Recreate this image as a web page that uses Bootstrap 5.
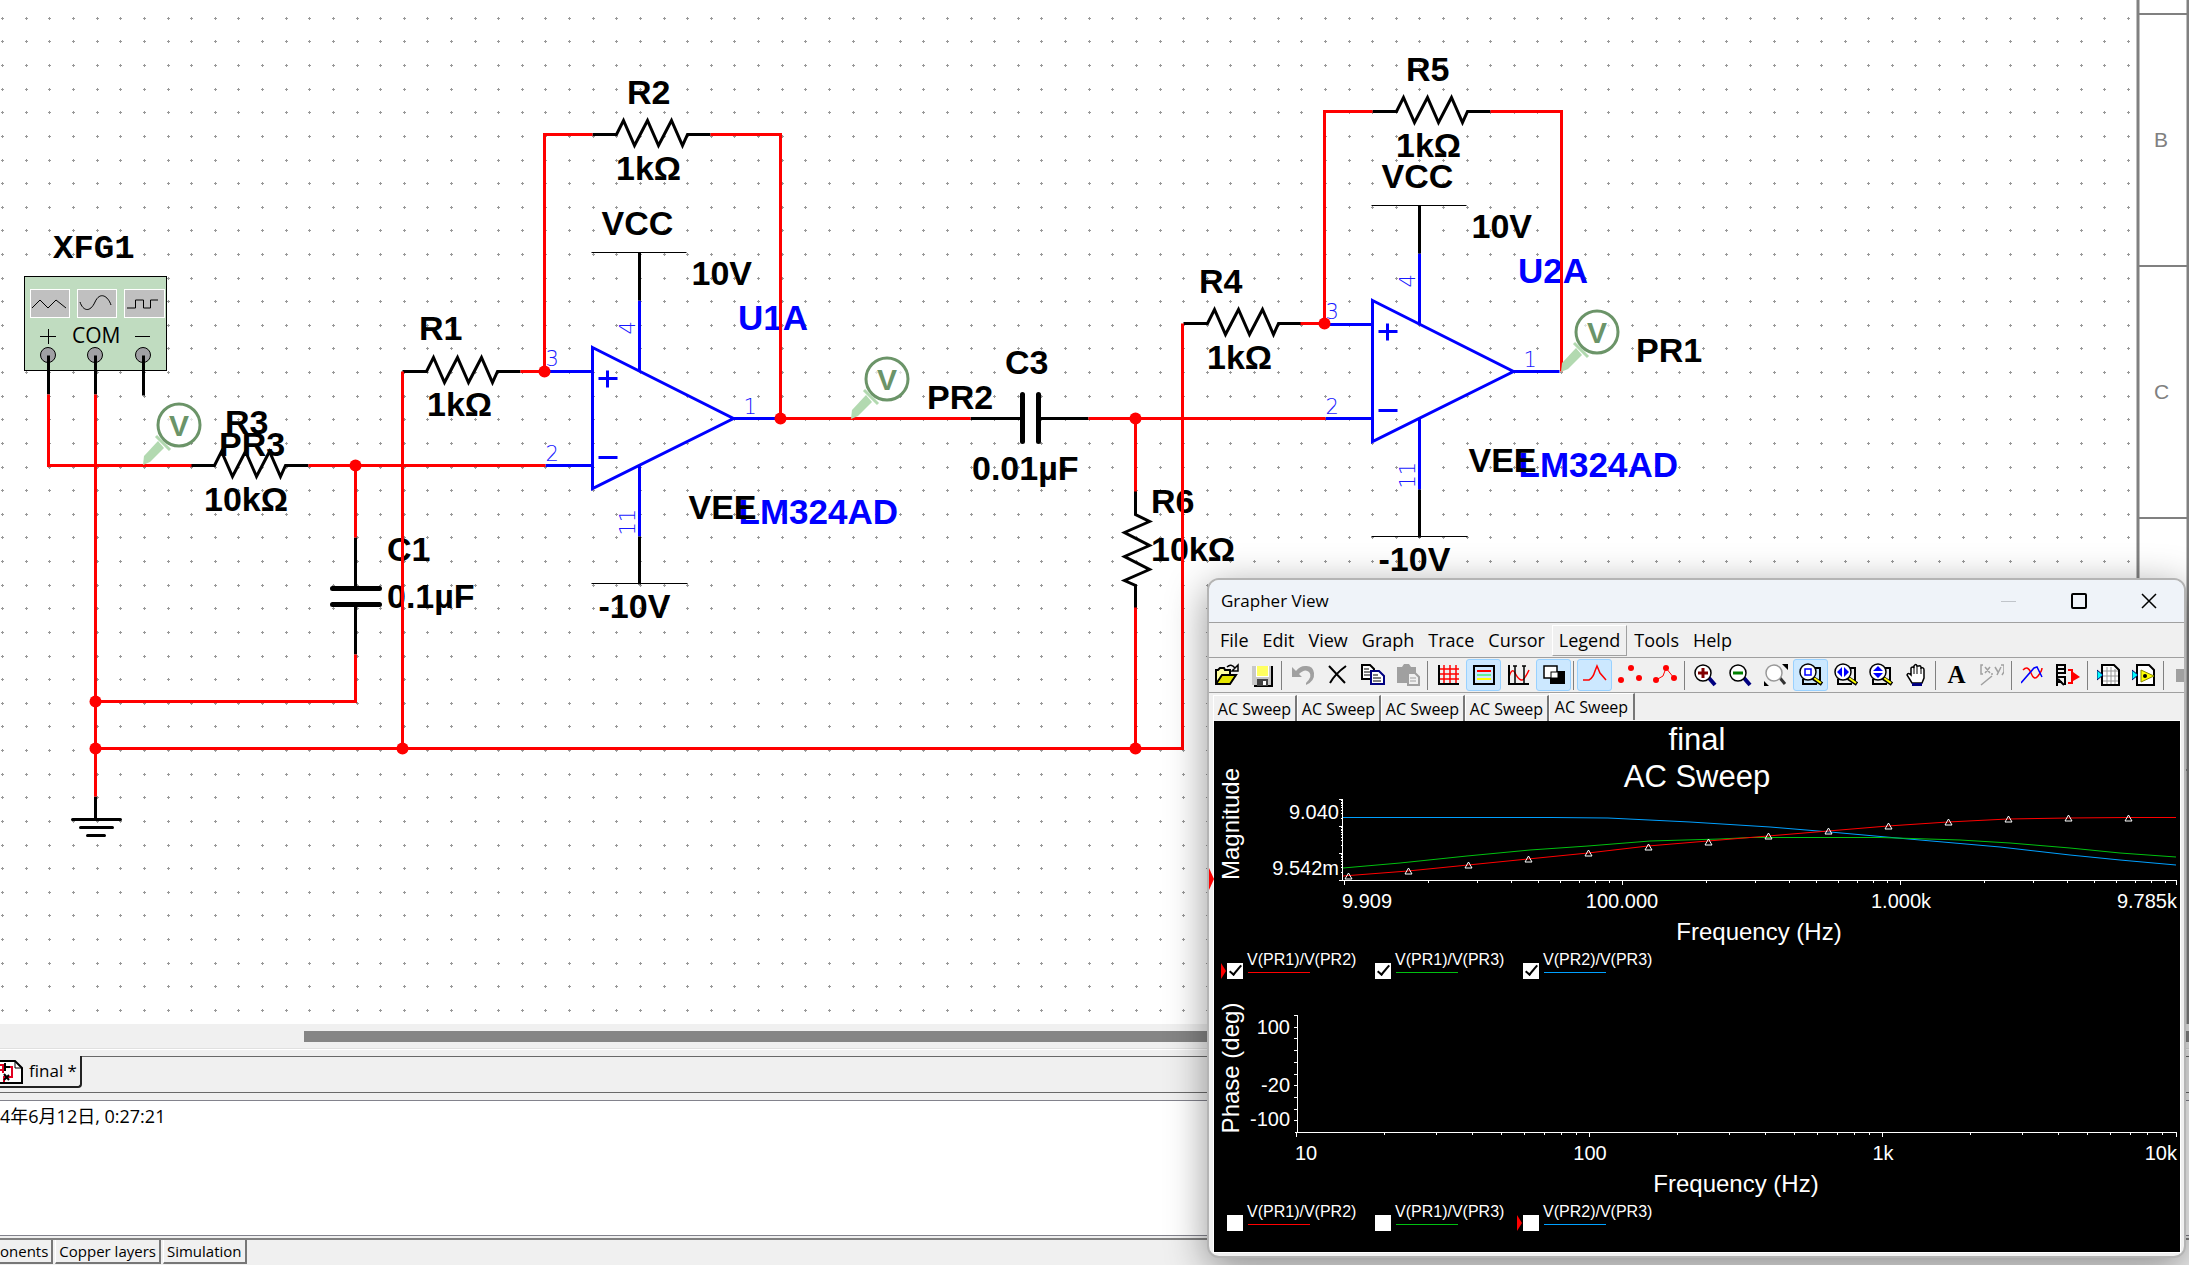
<!DOCTYPE html>
<html lang="en" class="overflow-hidden">
<head>
<meta charset="utf-8">
<meta name="viewport" content="width=device-width, initial-scale=1">
<title>final - Multisim</title>
<link href="https://cdn.jsdelivr.net/npm/bootstrap@5.3.0/dist/css/bootstrap.min.css" rel="stylesheet">
<style>
  body { font-family: "Open Sans", "Noto Sans CJK SC", sans-serif; font-size: 17px; color: #000; background: #f0f0f0; }
  button { font-family: inherit; color: inherit; }
  .sheet-area { min-height: 0; background: #fff; }
  .sheet-area svg { display: block; }
  .sheet-text { font: bold 34px "Liberation Sans", sans-serif; }
  .part-name { font-size: 35px; fill: #00f; }
  .pin-text { font: 200 21px "DejaVu Sans", sans-serif; fill: #1818ff; }
  .border-letter { font: 21px "Liberation Sans", sans-serif; fill: #808080; }

  .hscroll { height: 26px; padding-top: 7px; border-bottom: 1px solid #fff; box-shadow: inset 0 -1px #e0e0e0; }
  .hscroll-thumb { height: 11px; margin-left: 304px; background: #858585; }
  .doc-strip { height: 43px; padding-top: 6px; border-bottom: 1px solid #696969; }
  .doc-tab { height: 32px; width: 82px; padding: 0 0 0 26px; border: 0; border-right: 2px solid #222; border-bottom: 2px solid #222; border-radius: 0 0 4px 0; background: #f0f0f0; font-size: 17px; line-height: 30px; white-space: nowrap; }
  .doc-tab svg { left: 0; top: 4px; }
  .doc-rest { border-top: 1px solid #696969; }
  .log-pane { height: 136px; margin-top: 7px; background: #fff; border-top: 1px solid #82828c; border-bottom: 1px solid #82828c; font-size: 18px; line-height: 24px; padding-top: 3px; }
  .sheet-tabs { height: 27px; margin-top: 2px; border-top: 2px solid #808080; }
  .sheet-tabs button { height: 24px; margin-right: 2px; padding: 0 3px; border: 0; border-right: 2px solid #777; border-bottom: 2px solid #777; border-left: 1px solid #fff; background: #f0f0f0; font-size: 15px; line-height: 22px; }

  .grapher { right: 3px; bottom: 7px; width: 979px; background: #f0f0f0; border: 2px solid #b4b4b4; border-radius: 12px; box-shadow: 0 10px 40px rgba(0,0,0,.42); overflow: hidden; }
  .title-bar { height: 43px; padding-left: 12px; background: #eff3f9; border-bottom: 1px solid #a0a0a0; line-height: 24px; }
  .title-bar button { width: 70px; border: 0; background: none; padding: 0; line-height: 0; }
  .menu-bar { height: 35px; padding-left: 4px; border-bottom: 1px solid #a0a0a0; }
  .menu-bar button { height: 31px; padding: 0 6px; border: 1px solid transparent; background: none; font-size: 18px; line-height: 28px; }
  .menu-bar .lit { border-color: #fff #a0a0a0 #a0a0a0 #fff; }
  .tool-bar { height: 35px; border-bottom: 1px solid #a0a0a0; }
  .tool-bar button { flex: none; width: 35px; height: 32px; padding: 0; border: 1px solid transparent; border-radius: 3px; background: none; line-height: 0; }
  .tool-bar .on { background: #cce8ff; border-color: #99d1ff; }
  .tool-bar i { flex: none; width: 1px; height: 29px; margin: 0 3px 0 2px; background: #808080; }
  .tool-bar svg { width: 24px; height: 24px; }
  .tool-bar .letter-tool { font: bold 25px/28px "Liberation Serif", serif; }
  .tool-bar .more-mark { flex: none; width: 20px; height: 13px; margin-left: 9px; background: #a0a0a0; }
  .page-tabs { height: 28px; padding: 0 4px; }
  .page-tabs button { width: 84px; height: 26px; padding: 0; border: 0; border-left: 1px solid #fff; border-top: 1px solid #fff; border-right: 2px solid #777; background: #f0f0f0; font-size: 16px; line-height: 22px; }
  .page-tabs .current { width: 86px; height: 27px; }
  .plots { margin: 0 4px 4px 5px; background: #000; color: #fff; font-family: "Liberation Sans", sans-serif; box-shadow: 0 0 0 1px #fff; }
  .plots svg { display: block; width: 100%; }
  .plots text { fill: #fff; font-size: 20px; }
  .plots .head { font-size: 31px; }
  .plots .axis-name { font-size: 24px; }
  .key-row { height: 36px; padding-left: 13px; }
  .key-item { width: 148px; font-size: 16px; line-height: 16px; }
  .key-item label { padding-bottom: 4px; }
  .key-item hr { width: 62px; margin: 0 0 0 1px; border: 0; height: 1px; opacity: 1; background: var(--trace); }
  .key-item input { appearance: none; width: 16px; height: 16px; margin: 11px 4px 0 0; background: #fff; }
  .key-item input:checked::before { content: ""; display: block; width: 13px; height: 6px; margin: 3px 0 0 2px; border: solid #000; border-width: 0 0 2px 2px; transform: rotate(-50deg); }
  .flag { left: -6px; top: 11px; border: solid transparent; border-width: 8px 0 8px 5px; border-left-color: red; }
  .side-flag { left: 0; top: 288px; border: solid transparent; border-width: 11px 0 11px 5px; border-left-color: red; }
</style>
<script src="https://cdn.jsdelivr.net/npm/bootstrap@5.3.0/dist/js/bootstrap.bundle.min.js"></script>
</head>
<body class="vh-100 overflow-hidden position-relative d-flex flex-column">

<main class="sheet-area flex-grow-1 overflow-hidden">
<svg width="100%" height="100%" role="img" aria-label="Schematic final">
  <defs>
    <path id="res" d="M0 0H24L31 -14L42 11L55 -14L66 11L79 -14L90 11L95 0H118" fill="none" stroke="#000" stroke-width="3"/>
    <g id="probe">
      <path d="M0 0L1 -9L15 -24L21 -17L7 -3Z" fill="#b2d9b0"/>
      <path d="M13 -29L27 -15" stroke="#b2d9b0" stroke-width="3"/>
      <circle cx="36" cy="-40" r="21" fill="#fff" fill-opacity=".7" stroke="#6b9468" stroke-width="3"/>
      <text x="36" y="-29" text-anchor="middle" font-family="Liberation Sans, sans-serif" font-weight="bold" font-size="30" fill="#6b9468">V</text>
    </g>
    <g id="amp">
      <g fill="none" stroke="#00f" stroke-width="3">
        <path d="M592 347L733 418L592 488Z"/>
        <path d="M544 371H592M545 465H592M733 418H779M639 300V371M639 465V536M598 378H617M607 370V387M598 457H617"/>
      </g>
      <path d="M639 252V300M639 536V584" stroke="#000" stroke-width="3"/>
      <path d="M591 252H686M591 583H687" stroke="#000"/>
      <g class="pin-text">
        <text x="545" y="365">3</text><text x="545" y="460">2</text><text x="743" y="413">1</text>
        <text transform="translate(634 334) rotate(-90)">4</text>
        <text transform="translate(634 535) rotate(-90)">11</text>
      </g>
      <g class="sheet-text">
        <text x="601" y="234">VCC</text><text x="691" y="284">10V</text>
        <text x="598" y="617">-10V</text><text class="part-name" x="738" y="523">LM324AD</text><text x="688" y="518">VEE</text>
      </g>
    </g>
  </defs>
  <path id="grid" stroke="#999" shape-rendering="crispEdges" fill="none"/>
  <path d="M2138 0V1025M2188 0V1025" stroke="#808080" stroke-width="3"/>
  <path d="M2138 14H2189M2138 266H2189M2138 518H2189M2138 770H2189" stroke="#808080" stroke-width="2"/>
  <g class="border-letter"><text x="2154" y="147">B</text><text x="2154" y="399">C</text></g>

  <g class="sheet-text">
    <text x="53" y="258" style="font-family:'Liberation Mono',monospace">XFG1</text>
    <text x="627" y="104">R2</text><text x="616" y="180">1kΩ</text>
    <text x="419" y="340">R1</text><text x="427" y="416">1kΩ</text>
    <text x="387" y="561">C1</text><text x="387" y="608">0.1µF</text>
    <text x="1005" y="374">C3</text><text x="972" y="480">0.01µF</text>
    <text x="1151" y="513">R6</text><text x="1151" y="561">10kΩ</text>
    <text x="1199" y="293">R4</text><text x="1207" y="369">1kΩ</text>
    <text x="1406" y="81">R5</text><text x="1396" y="157">1kΩ</text>
    <text class="part-name" x="738" y="330">U1A</text><text class="part-name" x="1518" y="283">U2A</text>
  </g>

  <!-- function generator -->
  <g shape-rendering="crispEdges">
    <rect x="24" y="276" width="142" height="94" fill="#c0dcc0" stroke="#000"/>
    <g fill="#c0c0c0" stroke="#fff"><rect x="30" y="289" width="39" height="28"/><rect x="77" y="289" width="39" height="28"/><rect x="124" y="289" width="40" height="28"/></g>
  </g>
  <g fill="none" stroke="#000">
    <path d="M32 308L40 300L48 308L56 300L66 308M80 302C83 311 90 313 95 302S108 296 111 305M127 308H135.500V300H143.500V308H150.500V300H158M40 336.500H56M48.500 329V344M135 336.500H150"/>
    <g fill="#a0a0a4"><circle cx="48" cy="355" r="7.500"/><circle cx="95" cy="355" r="7.500"/><circle cx="143" cy="355" r="7.500"/></g>
  </g>
  <text x="72" y="343" font-size="21">COM</text>

  <g transform="translate(.5 .5)">
    <use href="#amp"/><use href="#amp" x="780" y="-47"/>
    <path d="M48 355V394M95 355V394M143 355V395M95 796V819M355 537V588M355 604V654M970 418H1022M1039 418H1088" stroke="#000" stroke-width="3"/>
    <path d="M72 819H120M80 827H112M87 835H104" stroke="#000" stroke-width="3" stroke-linecap="round"/>
    <path d="M332 588H379M332 604H379M1022 394V441M1038 394V441" stroke="#000" stroke-width="5" stroke-linecap="round"/>
    <use href="#res" x="592" y="134"/><use href="#res" x="402" y="371"/><use href="#res" x="190" y="465"/>
    <use href="#res" x="1372" y="111"/><use href="#res" x="1183" y="323"/>
    <use href="#res" transform="translate(1135 490) rotate(90)"/>
    <path d="M48 394V465H191M308 465H545M95 394V796M355 465V537M355 654V701H95M95 748H1182V323M402 748V371M544 371H520M544 371V134H592M710 134H780V418H970M1088 418H1325M1135 418V491M1135 607V748M1300 323H1324V111H1372M1490 111H1561V371" fill="none" stroke="red" stroke-width="3"/>
    <g fill="red"><circle cx="355" cy="465" r="6"/><circle cx="544" cy="371" r="6"/><circle cx="780" cy="418" r="6"/><circle cx="95" cy="701" r="6"/><circle cx="95" cy="748" r="6"/><circle cx="402" cy="748" r="6"/><circle cx="1135" cy="418" r="6"/><circle cx="1135" cy="748" r="6"/><circle cx="1324" cy="323" r="6"/></g>
  </g>
  <use href="#probe" x="143" y="465"/><use href="#probe" x="851" y="419"/><use href="#probe" x="1561" y="372"/>
  <g class="sheet-text"><text x="225" y="434">R3</text><text x="219" y="456">PR3</text><text x="204" y="511">10kΩ</text><text x="927" y="409">PR2</text><text x="1636" y="362">PR1</text></g>
</svg>
</main>

<div class="hscroll"><div class="hscroll-thumb"></div></div>
<nav class="doc-strip d-flex">
  <button class="doc-tab position-relative" type="button"><svg class="position-absolute" width="23" height="24"><path d="M-2 1H15L22 8V23H-2" fill="#fff" stroke="#000" stroke-width="2"/><path d="M15 1V8H22" fill="none" stroke="#000" stroke-width="1"/><path d="M0 5H3V13M8 7H12V17H4V22M0 10H5" fill="none" stroke="#e00020" stroke-width="2"/><path d="M5 3V11M5 7H10M4 14L9 20M9 15L4 20" stroke="#000" stroke-width="2"/></svg>final *</button>
  <div class="doc-rest flex-grow-1"></div>
</nav>
<section class="log-pane">4年6月12日, 0:27:21</section>
<nav class="sheet-tabs d-flex">
  <button type="button" class="ps-0 border-start-0">onents</button><button type="button">Copper layers</button><button type="button">Simulation</button>
</nav>

<section class="grapher position-absolute" aria-label="Grapher View">
  <header class="title-bar d-flex align-items-center">
    <span class="me-auto">Grapher View</span>
    <button type="button" aria-label="Minimize"><svg width="16" height="16"><path d="M0 8.500H15" stroke="#c0c4ca"/></svg></button>
    <button type="button" aria-label="Maximize"><svg width="16" height="16"><rect x="1" y="1" width="14" height="14" rx="1" fill="none" stroke="#000" stroke-width="2"/></svg></button>
    <button type="button" aria-label="Close"><svg width="16" height="16"><path d="M1 1L15 15M15 1L1 15" stroke="#000" stroke-width="1.500"/></svg></button>
  </header>
  <nav class="menu-bar d-flex align-items-center">
    <button type="button">File</button><button type="button">Edit</button><button type="button">View</button><button type="button">Graph</button><button type="button">Trace</button><button type="button">Cursor</button><button type="button" class="lit">Legend</button><button type="button">Tools</button><button type="button">Help</button>
  </nav>
  <div class="tool-bar d-flex align-items-center" role="toolbar">
    <button type="button" aria-label="Open"><svg viewBox="0 0 24 24"><path d="M1 21V7H3L5 5H9L10 7H15V11" fill="#ffffa0" stroke="#000" stroke-width="2"/><path d="M1 21L7 12H21L15 21Z" fill="#e6e600" stroke="#000" stroke-width="2"/><path d="M12 4Q16 0 20 5M23 2V8H17Z" fill="none" stroke="#000" stroke-width="1.500"/></svg></button>
    <button type="button" aria-label="Save"><svg viewBox="0 0 24 24"><path d="M2 3H21V22H2Z" fill="#c8c8c8"/><path d="M22 3V23H4" fill="none" stroke="#000" stroke-width="2"/><path d="M6 3V14H19V3" fill="#fff"/><rect x="7" y="3" width="11" height="10" fill="#ffff60"/><rect x="7" y="16" width="11" height="7" fill="#444"/><rect x="13" y="18" width="3" height="4" fill="#fff"/></svg></button><i></i>
    <button type="button" aria-label="Undo"><svg viewBox="0 0 24 24"><path d="M1 4V14H11L8 11Q14 5 18 9T15 20L15 22Q24 18 23 10T14 3Q9 3 5 8Z" fill="#a0a0a0"/></svg></button>
    <button type="button" aria-label="Delete"><svg viewBox="0 0 24 24"><path d="M3 3L19 20M20 3Q9 11 4 20" fill="none" stroke="#000" stroke-width="2"/></svg></button>
    <button type="button" aria-label="Copy"><svg viewBox="0 0 24 24"><path d="M1 2H9L13 6V16H1Z" fill="#fff" stroke="#000" stroke-width="2"/><path d="M3 6H8M3 9H9M3 12H9" stroke="#000"/><path d="M10 8H18L23 13V21H10Z" fill="#fff" stroke="#000080" stroke-width="2"/><path d="M12 12H17M12 15H20M12 18H20" stroke="#000"/></svg></button>
    <button type="button" aria-label="Paste"><svg viewBox="0 0 24 24"><path d="M1 4H6L8 1H13L15 4H20V20H1Z" fill="#a0a0a0"/><path d="M12 10H19L23 14V22H12Z" fill="#f0f0f0" stroke="#a0a0a0" stroke-width="2"/><path d="M14 15H20M14 18H20" stroke="#a0a0a0"/></svg></button><i></i>
    <button type="button" aria-label="Show grid"><svg viewBox="0 0 24 24"><path d="M7 2V20M13 2V20M19 2V20M2 6H22M2 11H22M2 16H22" stroke="red" stroke-width="1.500"/><path d="M2 2V21H22" fill="none" stroke="#000" stroke-width="2"/></svg></button>
    <button type="button" class="on" aria-label="Show legend"><svg viewBox="0 0 24 24"><rect x="2" y="3" width="20" height="18" fill="#cce8ff" stroke="#000" stroke-width="2"/><path d="M5 8H19" stroke="red" stroke-width="2"/><path d="M5 12H19" stroke="#0e3" stroke-width="1"/><path d="M5 16H19" stroke="#ff0" stroke-width="2"/></svg></button>
    <button type="button" aria-label="Show cursors"><svg viewBox="0 0 24 24"><path d="M2 14Q5 4 8 10T14 17T22 7" fill="none" stroke="red" stroke-width="1.500"/><path d="M2 2V21H22" fill="none" stroke="#000" stroke-width="2"/><path d="M8 3V21M17 3V21M6 3H10M15 3H19" stroke="#000" stroke-width="1.500"/></svg></button>
    <button type="button" class="on" aria-label="Black and white"><svg viewBox="0 0 24 24"><rect x="8" y="8" width="15" height="13"/><rect x="2" y="3" width="13" height="12" fill="#fff" stroke="#000" stroke-width="1.500"/><rect x="9" y="9" width="7" height="6" stroke="#000" fill="#fff"/></svg></button><i></i>
    <button type="button" class="on" aria-label="Line"><svg viewBox="0 0 24 24"><path d="M0 17H6Q10 15 12 8L14 3L17 10L23 17" fill="none" stroke="red" stroke-width="1.500"/></svg></button>
    <button type="button" aria-label="Symbols"><svg viewBox="0 0 24 24" fill="red"><circle cx="3" cy="17" r="3"/><circle cx="13" cy="5" r="3"/><circle cx="21" cy="15" r="3"/></svg></button>
    <button type="button" aria-label="Line and symbols"><svg viewBox="0 0 24 24" fill="red"><path d="M3 17L10 13L13 5L21 15" fill="none" stroke="red"/><circle cx="3" cy="17" r="3"/><circle cx="13" cy="5" r="3"/><circle cx="21" cy="15" r="3"/></svg></button><i></i>
    <button type="button" aria-label="Zoom in"><svg viewBox="0 0 24 24"><path d="M15 15L21 22" stroke="#000080" stroke-width="4"/><circle cx="9" cy="10" r="8" fill="#fff" stroke="#000" stroke-width="1.500"/><path d="M9 5V15M4 10H14" stroke="#800000" stroke-width="3"/></svg></button>
    <button type="button" aria-label="Zoom out"><svg viewBox="0 0 24 24"><path d="M15 15L21 22" stroke="#000080" stroke-width="4"/><circle cx="9" cy="10" r="8" fill="#fff" stroke="#000" stroke-width="1.500"/><path d="M4 10H14" stroke="#008000" stroke-width="3"/></svg></button>
    <button type="button" aria-label="Restore graph"><svg viewBox="0 0 24 24"><path d="M16 15L21 21" stroke="#333" stroke-width="3"/><circle cx="10" cy="10" r="8" fill="#fff" stroke="#999" stroke-width="1.500"/><path d="M18 1H24V7ZM0 18V23H5Z"/></svg></button>
    <button type="button" class="on" aria-label="Zoom area"><svg viewBox="0 0 24 24"><path d="M4 16V21H18M14 5H21V21" fill="none" stroke="#000" stroke-width="2"/><path d="M14 15L23 21" stroke="#000" stroke-width="4"/><path d="M15 15L22 20" stroke="#ff0" stroke-width="2"/><circle cx="9" cy="9" r="8" fill="#fff" stroke="#000" stroke-width="1.500"/><rect x="6" y="6" width="6" height="6" fill="none" stroke="#00f" stroke-width="1.500"/></svg></button>
    <button type="button" aria-label="Zoom horizontal"><svg viewBox="0 0 24 24"><path d="M4 16V21H18M14 5H21V21" fill="none" stroke="#000" stroke-width="2"/><path d="M14 15L23 21" stroke="#000" stroke-width="4"/><path d="M15 15L22 20" stroke="#ff0" stroke-width="2"/><circle cx="9" cy="9" r="8" fill="#fff" stroke="#000" stroke-width="1.500"/><path d="M3 9L8 4V14ZM15 9L10 4V14Z" fill="#00f"/></svg></button>
    <button type="button" aria-label="Zoom vertical"><svg viewBox="0 0 24 24"><path d="M4 16V21H18M14 5H21V21" fill="none" stroke="#000" stroke-width="2"/><path d="M14 15L23 21" stroke="#000" stroke-width="4"/><path d="M15 15L22 20" stroke="#ff0" stroke-width="2"/><circle cx="9" cy="9" r="8" fill="#fff" stroke="#000" stroke-width="1.500"/><path d="M9 3L14 8H4ZM9 15L14 10H4Z" fill="#00f"/></svg></button>
    <button type="button" aria-label="Pan"><svg viewBox="0 0 24 24"><path d="M8 20L3 12Q4 9 7 12V5Q9 3 10 5V3Q12 0 13 3L15 3Q17 2 17 5Q20 4 20 7V15L18 20Z" fill="#fff" stroke="#000" stroke-width="1.500"/><path d="M10 5V11M13 3V11M17 5V11" stroke="#000"/><rect x="8" y="20" width="10" height="3" fill="#000080"/></svg></button><i></i>
    <button type="button" class="letter-tool" title="Add text">A</button>
    <button type="button" aria-label="Add data label"><svg viewBox="0 0 24 24" fill="none" stroke="#a0a0a0" stroke-width="1.500"><path d="M3 2H1V11H3M21 2H24V9L22 12M5 4L10 10M10 4L5 10M12 10V12M15 4L18 9M21 4L17 12M1 22L12 13"/></svg></button><i></i>
    <button type="button" aria-label="Overlay traces"><svg viewBox="0 0 24 24" fill="none" stroke-width="1.500"><path d="M2 7Q7 2 10 10T17 13T21 5" stroke="red"/><path d="M0 20L13 5L16 4L21 14" stroke="#00f"/></svg></button>
    <button type="button" aria-label="Add traces"><svg viewBox="0 0 24 24" fill="none" stroke-width="2"><path d="M1 1V23M1 2H9V10H1M1 6H8M1 14H9V22M2 16L8 22M1 19H6" stroke="#000"/><path d="M12 7H16V20H12" stroke="red"/><path d="M17 9L24 14L17 18Z" fill="red"/></svg></button><i></i>
    <button type="button" aria-label="Export to Excel"><svg viewBox="0 0 24 24"><path d="M5 2H17L22 7V22H5Z" fill="#fff" stroke="#000" stroke-width="2"/><path d="M6 8H21M6 13H21M6 18H21M10 4V21M14 4V21M18 6V21" stroke="#999"/><path d="M0 7L6 12L0 17Z" fill="#0ff" stroke="#006"/></svg></button>
    <button type="button" aria-label="Export to LabVIEW"><svg viewBox="0 0 24 24"><path d="M5 2H17L22 7V22H5Z" fill="#fff" stroke="#000" stroke-width="2"/><path d="M0 7L6 12L0 17Z" fill="#0ff" stroke="#006"/><path d="M9 7L22 13L9 19Z" fill="#ff0" stroke="#880"/><circle cx="13" cy="13" r="2"/></svg></button><i></i>
    <span class="more-mark"></span>
  </div>
  <nav class="page-tabs d-flex align-items-end">
    <button type="button">AC Sweep</button><button type="button">AC Sweep</button><button type="button">AC Sweep</button><button type="button">AC Sweep</button><button type="button" class="current align-self-start">AC Sweep</button>
  </nav>
  <div class="plots">
    <svg height="231" viewBox="1214 722 966 231" role="img" aria-label="Magnitude plot">
      <g text-anchor="middle">
        <text class="head" x="1697" y="751">final</text><text class="head" x="1697" y="788">AC Sweep</text>
        <text class="axis-name" transform="translate(1239 825) rotate(-90)">Magnitude</text>
        <text x="1622" y="909">100.000</text><text x="1901" y="909">1.000k</text>
        <text class="axis-name" x="1759" y="941">Frequency (Hz)</text>
      </g>
      <text x="1342" y="909">9.909</text>
      <g text-anchor="end"><text x="1339" y="820">9.040</text><text x="1339" y="876">9.542m</text><text x="2177" y="909">9.785k</text></g>
      <path id="axisA" fill="none" stroke="#fff" shape-rendering="crispEdges"/>
      <g fill="none">
        <path stroke="#00a0ff" d="M1343 818.500H1552L1608 819L1690 823L1770 828L1830 833L1920 841L2000 848L2070 856L2120 861L2176 866"/>
        <path stroke="#00c010" d="M1343 869L1400 864L1467 857L1530 851L1588 847L1650 842L1720 840L1750 838.500H1880L1960 841L2010 844L2070 849L2120 854L2176 858"/>
        <path stroke="red" d="M1343 877L1408 872L1468 866L1528 860L1588 854L1648 847L1708 842L1768 837L1828 832L1888 827L1948 823L2008 820L2068 819L2128 818.500H2176"/>
        <path id="marks" stroke="#fff"/>
      </g>
    </svg>
    <div class="key-row d-flex">
      <div class="key-item d-flex position-relative" style="--trace:red"><span class="flag position-absolute"></span><input type="checkbox" id="m1" checked><div><label for="m1" class="d-block">V(PR1)/V(PR2)</label><hr></div></div>
      <div class="key-item d-flex" style="--trace:#00c010"><input type="checkbox" id="m2" checked><div><label for="m2" class="d-block">V(PR1)/V(PR3)</label><hr></div></div>
      <div class="key-item d-flex" style="--trace:#00a0ff"><input type="checkbox" id="m3" checked><div><label for="m3" class="d-block">V(PR2)/V(PR3)</label><hr></div></div>
    </div>
    <svg height="216" viewBox="1214 989 966 216" role="img" aria-label="Phase plot">
      <g text-anchor="middle">
        <text class="axis-name" transform="translate(1239 1069) rotate(-90)">Phase (deg)</text>
        <text x="1590" y="1161">100</text><text x="1883" y="1161">1k</text>
        <text class="axis-name" x="1736" y="1193">Frequency (Hz)</text>
      </g>
      <text x="1295" y="1161">10</text>
      <g text-anchor="end"><text x="1290" y="1035">100</text><text x="1290" y="1093">-20</text><text x="1290" y="1127">-100</text><text x="2177" y="1161">10k</text></g>
      <path id="axisB" fill="none" stroke="#fff" shape-rendering="crispEdges"/>
    </svg>
    <div class="key-row d-flex">
      <div class="key-item d-flex" style="--trace:red"><input type="checkbox" id="p1"><div><label for="p1" class="d-block">V(PR1)/V(PR2)</label><hr></div></div>
      <div class="key-item d-flex" style="--trace:#00c010"><input type="checkbox" id="p2"><div><label for="p2" class="d-block">V(PR1)/V(PR3)</label><hr></div></div>
      <div class="key-item d-flex position-relative" style="--trace:#00a0ff"><span class="flag position-absolute"></span><input type="checkbox" id="p3"><div><label for="p3" class="d-block">V(PR2)/V(PR3)</label><hr></div></div>
    </div>
    <div class="pb-2 pt-1"></div>
  </div>
  <span class="side-flag position-absolute"></span>
</section>

<script>
  const put = (id, d) => document.getElementById(id).setAttribute('d', d);

  // snap grid: a small cross at each step of the sheet
  const step = 23.62;
  let d = '';
  for (let y = 17.8 - step; y < 1025; y += step)
    for (let x = 2.2; x < 2136; x += step) {
      const cx = Math.round(x), cy = Math.round(y);
      d += `M${cx - 1} ${cy}.5h3M${cx}.5 ${cy - 1}v3`;
    }
  put('grid', d);

  // logarithmic ticks under a frequency axis
  const ticks = (first, decade, from, end, y) => {
    let s = '';
    for (let k = 0; k < 4; k++)
      for (let n = 1; n < 10; n++) {
        const x = Math.round(first + decade * (k + Math.log10(n)));
        if (x >= from && x <= end) s += `M${x}.5 ${y}v${n === 1 ? 4 : 2}`;
      }
    return s;
  };
  let a = 'M1342.5 800V882M1340 881.5H2177M2176.5 882v4' + ticks(1344, 278, 1343, 2175, 882);
  for (let k = 0; k < 4; k++) {
    const y = 800 + 27 * k;
    a += `M1339 ${y}.5h4`;
    if (k < 3) for (let n = 2; n < 10; n++) a += `M1341 ${Math.round(y + 27 * (1 - Math.log10(n)))}.5h2`;
  }
  put('axisA', a);
  let b = 'M1297.5 1016V1134M1295 1133.5H2177M2176.5 1134v4' + ticks(1296, 293, 1295, 2174, 1134);
  for (let k = 0; k < 10; k++) b += `M1294 ${Math.round(1016 + 11.7 * k)}.5h3`;
  put('axisB', b);

  const ys = [877, 872, 866, 860, 854, 848, 843, 837, 832, 827, 823, 820, 819, 819];
  put('marks', ys.map((y, i) => `M${1345 + 60 * i} ${y + 3}h7l-3.5 -6z`).join(''));
</script>
</body>
</html>
